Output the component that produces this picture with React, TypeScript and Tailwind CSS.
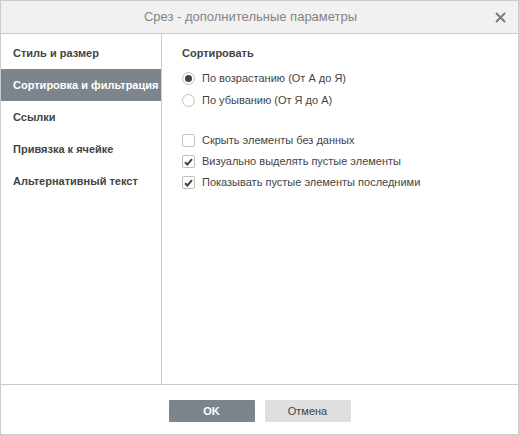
import { useState } from 'react';

const TABS = [
  'Стиль и размер',
  'Сортировка и фильтрация',
  'Ссылки',
  'Привязка к ячейке',
  'Альтернативный текст',
];

const FONT = { fontFamily: '"Liberation Sans", Arial, sans-serif' };

function Radio({ checked, label }: { checked: boolean; label: string }) {
  return (
    <div className="flex items-center h-[22px]">
      <span className="w-[13px] h-[13px] rounded-full border border-[#c0c0c0] flex items-center justify-center bg-white">
        {checked && <span className="w-[7px] h-[7px] rounded-full bg-[#444]" />}
      </span>
      <span className="ml-[7px] text-[11px] text-[#444]">{label}</span>
    </div>
  );
}

function Checkbox({ checked, label }: { checked: boolean; label: string }) {
  return (
    <div className="flex items-center h-[21px]">
      <span className="w-[13px] h-[13px] border border-[#c0c0c0] rounded-[2px] bg-white flex items-center justify-center">
        {checked && (
          <svg width="9" height="8" viewBox="0 0 9 8">
            <path d="M1 4.2 L3.4 6.5 L8 1.2" fill="none" stroke="#444" strokeWidth="2" />
          </svg>
        )}
      </span>
      <span className="ml-[7px] text-[11px] text-[#444]">{label}</span>
    </div>
  );
}

export default function App() {
  const [active, setActive] = useState(1);

  return (
    <div style={FONT} className="w-[519px] h-[435px] border border-[#cbcbcb] bg-white flex flex-col">
      <div className="h-[33px] bg-[#f1f1f1] border-b border-[#cbcbcb] relative flex items-center justify-center pr-[18px] shrink-0">
        <span className="text-[13px] text-[#848484]">Срез - дополнительные параметры</span>
        <svg className="absolute right-[12px] top-[11px]" width="11" height="11" viewBox="0 0 11 11">
          <path d="M1 1 L10 10 M10 1 L1 10" stroke="#7d7d7d" strokeWidth="2" />
        </svg>
      </div>

      <div className="flex flex-1 border-b border-[#cbcbcb]">
        <div className="w-[161px] border-r border-[#cbcbcb] pt-[3px]">
          {TABS.map((t, i) => (
            <div
              key={t}
              onClick={() => setActive(i)}
              className={`h-[32px] flex items-center pl-[12px] text-[11px] font-bold whitespace-nowrap ${
                i === active ? 'bg-[#7d858c] text-white' : 'text-[#444]'
              }`}
            >
              {t}
            </div>
          ))}
        </div>

        <div className="flex-1 pl-[20px] pt-[12px]">
          <div className="text-[11px] font-bold text-[#444] leading-[14px]">Сортировать</div>
          <div className="mt-[7px]">
            <Radio checked label="По возрастанию (От А до Я)" />
            <Radio checked={false} label="По убыванию (От Я до А)" />
          </div>
          <div className="mt-[19px]">
            <Checkbox checked={false} label="Скрыть элементы без данных" />
            <Checkbox checked label="Визуально выделять пустые элементы" />
            <Checkbox checked label="Показывать пустые элементы последними" />
          </div>
        </div>
      </div>

      <div className="h-[49px] shrink-0 flex justify-center gap-[10px] pt-[15px]">
        <button className="w-[86px] h-[22px] bg-[#7d858c] text-white text-[11px] font-bold rounded-[1px]">OK</button>
        <button className="w-[86px] h-[22px] bg-[#dfdfdf] text-[#444] text-[11px] rounded-[1px]">Отмена</button>
      </div>
    </div>
  );
}
